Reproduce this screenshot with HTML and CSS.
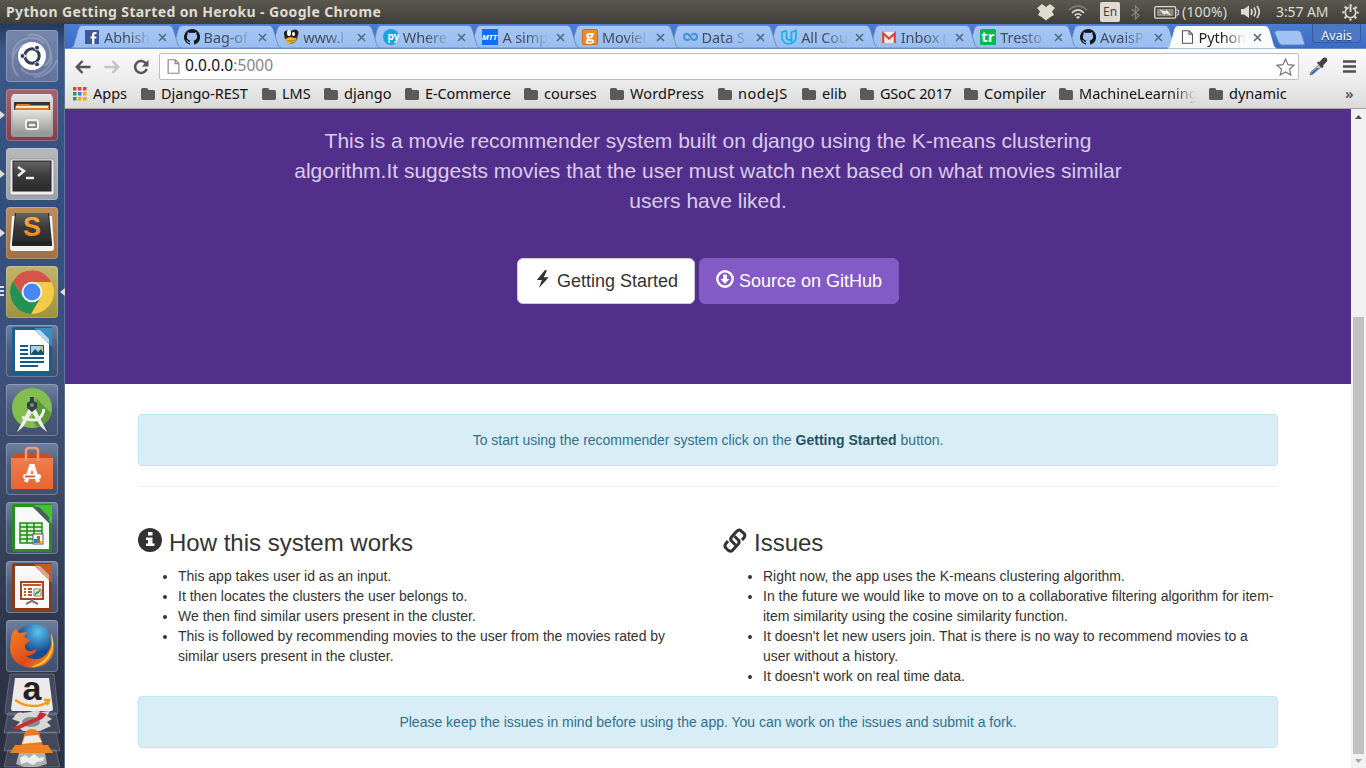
FILE: index.html
```html
<!DOCTYPE html>
<html lang="en">
<head>
<meta charset="utf-8">
<title>Python Getting Started on Heroku</title>
<link rel="stylesheet" href="styles.css">
</head>
<body>
<svg width="0" height="0" class="defs">
  <defs>
    <linearGradient id="tabfill" x2="0" y2="1"><stop stop-color="#a6c7f6"/><stop offset="1" stop-color="#98bdf0"/></linearGradient>
    <linearGradient id="metal" x2="0" y2="1"><stop stop-color="#e4e4e2"/><stop offset="1" stop-color="#969694"/></linearGradient>
    <linearGradient id="dark" x2="0" y2="1"><stop stop-color="#646464"/><stop offset=".5" stop-color="#3b3b3b"/><stop offset="1" stop-color="#2c2c2c"/></linearGradient>
    <linearGradient id="bag" x2="0" y2="1"><stop stop-color="#f08052"/><stop offset="1" stop-color="#ea6530"/></linearGradient>
    <linearGradient id="glow" x2="0" y2="1"><stop stop-color="#ffb45a"/><stop offset="1" stop-color="#ef7c10"/></linearGradient>
    <radialGradient id="globe" cx=".6" cy=".2"><stop stop-color="#5dc3ef"/><stop offset="1" stop-color="#174d91"/></radialGradient>
    <linearGradient id="fox" x2="1" y2="1"><stop stop-color="#f58220"/><stop offset=".6" stop-color="#dc4a1c"/><stop offset="1" stop-color="#f9a824"/></linearGradient>
    <symbol id="tab" viewBox="0 0 110 24"><path d="M0 24C3 23 3 20 4 17L7 6Q8 1.500 11 1.500H98Q101 1.500 102.500 6L106 18Q107 23 110 24Z"/></symbol>
    <symbol id="x" viewBox="0 0 9 9"><path d="M1 1L8 8M8 1L1 8" fill="none" stroke="#55697f" stroke-width="1.600"/></symbol>
    <symbol id="folder" viewBox="0 0 14 12"><path d="M0 1.500Q0 0 1.500 0H5.500Q7 0 7.300 2H12.500Q14 2 14 3.500V10.500Q14 12 12.500 12H1.500Q0 12 0 10.500Z" fill="#5a5a5a"/></symbol>
    <symbol id="page" viewBox="0 0 12 14"><path d="M1 .7H7.500L11 4.200V13.300H1ZM7.500 .7V4.300H11" fill="#fff" stroke="currentColor" stroke-width="1.100"/></symbol>
    <symbol id="github" viewBox="0 0 16 16"><path fill="#15171a" d="M8 0a8 8 0 0 0-2.500 15.600c.4.100.500-.2.500-.4v-1.400c-2.200.5-2.700-1-2.700-1-.4-.9-.9-1.200-.9-1.200-.7-.5.100-.5.100-.5.800.100 1.200.8 1.200.8.700 1.200 1.900.9 2.300.7.100-.5.300-.9.500-1.100C4.700 11.300 2.900 10.600 2.900 7.500c0-.9.300-1.600.8-2.100-.1-.2-.4-1 .1-2.100 0 0 .7-.2 2.200.8a7.500 7.500 0 0 1 4 0c1.500-1 2.200-.8 2.200-.8.5 1.100.2 1.900.1 2.100.5.500.8 1.200.8 2.100 0 3.100-1.900 3.800-3.600 4 .3.200.5.700.5 1.500v2.200c0 .2.100.5.600.4A8 8 0 0 0 8 0z"/></symbol>
  </defs>
</svg>

<header class="menubar">
  <span class="win-title">Python Getting Started on Heroku - Google Chrome</span>
  <div class="tray">
    <svg width="18" height="17" viewBox="0 0 18 17"><path fill="#dfdbd2" d="M5 0L9 3L13 0L18 4L15 7.500L17 11L13.500 13L9 16.500L4.500 13L1 11L3 7.500L0 4Z"/></svg>
    <svg class="wifi" width="20" height="14" viewBox="0 0 20 14" fill="none" stroke="#dfdbd2" stroke-width="1.600"><path d="M1 5Q10-3 19 5" stroke="#85827b"/><path d="M4 7.800Q10 2 16 7.800M6.700 10.500Q10 7 13.300 10.500"/><path d="M10 14L7.800 12Q10 10.500 12.200 12Z" fill="#dfdbd2" stroke="none"/></svg>
    <span class="lang">En</span>
    <svg class="bt" width="9" height="15" viewBox="0 0 9 15"><path d="M.7 4L8 10.500L4.500 14V1L8 4.500L.7 11" fill="none" stroke="#85827b" stroke-width="1.300"/></svg>
    <svg class="bat" width="25" height="13" viewBox="0 0 25 13"><rect x=".7" y=".7" width="21" height="11.500" rx="1.500" fill="none" stroke="#dfdbd2" stroke-width="1.300"/><rect x="3" y="3" width="16.500" height="7" fill="#8c8982"/><path d="M22.500 4H24.300V9H22.500" fill="none" stroke="#dfdbd2"/><path d="M5.500 3.500L11.500 5.500L12.500 3.800L17.500 9.500L11.500 7.300L10.300 9Z" fill="#eeeae2"/></svg>
    <span class="pct">(100%)</span>
    <svg class="vol" width="21" height="16" viewBox="0 0 21 16"><path d="M1 5H4L9 1.500V14L4 10.500H1Z" fill="#dfdbd2"/><path d="M11 5Q13 8 11 11M14 3.500Q17 8 14 12.500M17 2Q21.500 8 17 14" fill="none" stroke="#dfdbd2" stroke-width="1.600"/></svg>
    <span class="clock">3:57 AM</span>
    <svg width="17" height="17" viewBox="0 0 17 17" fill="none" stroke="#dfdbd2"><circle cx="8.500" cy="8.500" r="5.200" stroke-width="1.600" stroke-dasharray="27.700 5" stroke-dashoffset="-2.500" transform="rotate(-90 8.500 8.500)"/><circle cx="8.500" cy="8.500" r="7.100" stroke-width="2.200" stroke-dasharray="2.200 3.376" stroke-dashoffset="1.100"/><path d="M8.500 1.500V8" stroke-width="1.800"/></svg>
  </div>
</header>

<div class="desktop">
<nav class="launcher">
  <div class="tile t-dash run0"><svg viewBox="0 0 52 52"><g fill="none" stroke="#fff" stroke-opacity=".2" stroke-width="2"><path d="M7 30C3 8 31 2 38 14M22 5C44 1 51 30 38 36M45 23C50 43 24 51 15 38M12 46C2 35 7 20 17 14M28 47C43 46 48 37 51 30"/></g><circle cx="26" cy="26" r="14" fill="#fff"/><circle cx="26" cy="26" r="7.200" fill="none" stroke="#323d59" stroke-width="3"/><path d="M17 26H20M30 19L31.500 16.500M30 33L31.500 35.500" stroke="#fff" stroke-width="2"/><g fill="#323d59" stroke="#fff" stroke-width=".8"><circle cx="16.500" cy="26" r="2.400"/><circle cx="31" cy="17.700" r="2.400"/><circle cx="31" cy="34.300" r="2.400"/></g></svg></div>
  <div class="tile t-files run1"><svg viewBox="0 0 52 52"><path d="M7 5H45L47 9V45Q47 48 44 48H8Q5 48 5 45V9Z" fill="url(#metal)"/><path d="M8 13H44V23H8Z" fill="#343434"/><path d="M9 18L11 15H23L25 16H43V23H9Z" fill="#e4791f"/><path d="M10 18H42" stroke="#ffe8c7" stroke-width="2"/><path d="M7 21H45V45H7Z" fill="url(#metal)"/><rect x="20" y="31" width="12" height="9" rx="2" fill="#aaa" stroke="#efefef" stroke-width="2"/><rect x="22" y="34" width="8" height="4" fill="#eee" stroke="#555"/></svg></div>
  <div class="tile t-term run1"><svg viewBox="0 0 52 52"><rect x="4" y="11" width="44" height="36" rx="2" fill="#eee" stroke="#999"/><rect x="7" y="13" width="38" height="30" fill="url(#dark)" stroke="#222"/><path d="M12 19L18 23L12 28" fill="none" stroke="#eee" stroke-width="2.500"/><path d="M20 30H28" stroke="#eee" stroke-width="2.400"/></svg></div>
  <div class="tile t-subl run1"><svg viewBox="0 0 52 52"><path d="M6 9H46L48 41Q48 44 45 44H7Q4 44 4 41Z" fill="#f3f3f3"/><path d="M9 6H43L46 36V39H6V36Z" fill="#242424"/><path d="M10 6H42L45 34H7Z" fill="url(#dark)"/><text x="26" y="29" text-anchor="middle" class="g-s" fill="url(#glow)">S</text></svg></div>
  <div class="tile t-chrome run3"><svg viewBox="0 0 52 52"><circle cx="26" cy="26" r="22" fill="#f7cb45"/><path d="M26 26L26 16H45.500A22 22 0 0 0 7 15L17 31Z" fill="#d5544c"/><path d="M7 15A22 22 0 0 0 25 48L35 31L26 36L17 31Z" fill="#239255"/><circle cx="26" cy="26" r="10.300" fill="#f4f6f6"/><circle cx="26" cy="26" r="8.500" fill="#4787f2"/></svg></div>
  <div class="tile run0"><svg viewBox="0 0 52 52"><path d="M8 2H46V48Q46 50 43 50H9Q6 50 6 47V4Q6 2 8 2Z" fill="#165f90"/><path d="M28 3H46V22Z" fill="#388bc4"/><path d="M9 5H29L43 19V46H9Z" fill="#fff"/><path d="M29 5L43 19V14L34 5Z" fill="#b9d9ec"/><path d="M14 21H22M14 25H22M14 29H22M14 33H38M14 37H38M14 41H32" stroke="#155989" stroke-width="2"/><rect x="24.500" y="20.500" width="13" height="9" fill="#a5d4ef" stroke="#155989"/><path d="M25 29L29 24L32 27L35 24L38 29Z" fill="#244b62"/><circle cx="35.500" cy="22.500" r="1.500" fill="#f4b630"/></svg></div>
  <div class="tile run0"><svg viewBox="0 0 52 52"><circle cx="26" cy="24" r="20" fill="#83bd4f"/><path d="M30 14L45 29A20 20 0 0 1 31 43L26 36Z" fill="#5b9935"/><path d="M23 24L11 48L17 43L27 27ZM29 24L41 48L35 43L25 27Z" fill="#eef0f0"/><path d="M16 33Q35 42 38 25" fill="none" stroke="#eef0f0" stroke-width="3"/><path d="M24 13H28V17L31 19V24L26 28L21 24V19L24 17Z" fill="#384047"/><circle cx="26" cy="21" r="2" fill="#83888c"/></svg></div>
  <div class="tile run0"><svg viewBox="0 0 52 52"><path d="M5 15L9 11H43L47 15V46H5Z" fill="url(#bag)"/><path d="M5 15L9 11H43L47 15" fill="#c94d22"/><path d="M20 18V8Q20 5 23 5H29Q32 5 32 8V18" fill="none" stroke="#f19a76" stroke-width="2.500"/><path d="M20 39L25 23H27L32 39" fill="none" stroke="#fff" stroke-width="4"/><rect x="17" y="31" width="18" height="5" rx="2.500" fill="#fff"/><path d="M19 33.500H29" stroke="#e95b25" stroke-width="2"/></svg></div>
  <div class="tile run0"><svg viewBox="0 0 52 52"><path d="M8 2H46V48Q46 50 43 50H9Q6 50 6 47V4Q6 2 8 2Z" fill="#258f1c"/><path d="M28 3H46V22Z" fill="#43c330"/><path d="M9 5H27L43 21V47H9Z" fill="#f8f8f8"/><path d="M27 5L43 21V15L33 5Z" fill="#4b5b60"/><path d="M14 21H36V41H14ZM14 25H36M14 29H36M14 33H36M14 37H36M21 21V41M28 21V41" fill="#d6f0ce" stroke="#1f8c19" stroke-width="1.500"/><rect x="27" y="32" width="10" height="10" fill="#fff" stroke="#555"/><path d="M28 37H31V41H28Z" fill="#1485c8"/><path d="M31 34H34V41H31Z" fill="#d25b20"/><path d="M34 39H37V41H34Z" fill="#edb61f"/></svg></div>
  <div class="tile run0"><svg viewBox="0 0 52 52"><path d="M8 2H46V48Q46 50 43 50H9Q6 50 6 47V4Q6 2 8 2Z" fill="#8d3b16"/><path d="M28 3H46V22Z" fill="#c75a2b"/><path d="M9 5H29L43 19V47H9Z" fill="#f8f8f8"/><path d="M29 5L43 19V14L34 5Z" fill="#e2a78b"/><rect x="15" y="21" width="22" height="17" fill="#fff" stroke="#a54717" stroke-width="2"/><path d="M17 24H35M18 28H20M22 28H26M18 31H20M22 31H26M18 34H20M22 34H26" stroke="#bd592c" stroke-width="2"/><path d="M26 38V40L20 43M26 40L32 43" stroke="#777" stroke-width="2" fill="none"/><path d="M28 28H35V35H28Z" fill="none" stroke="#777"/><path d="M29 34L31 31L32 32L34 29" fill="none" stroke="#329b37" stroke-width="1.500"/></svg></div>
  <div class="tile run0"><svg viewBox="0 0 52 52"><circle cx="28" cy="24" r="20" fill="url(#globe)"/><path d="M5 20Q5 12 10 9L13 13L21 12L18 17L24 20L19 25Q18 31 25 31L31 29Q29 36 20 36Q28 42 37 37Q46 31 45 18L41 11Q50 18 48 31Q44 46 27 48Q4 46 4 27Z" fill="url(#fox)"/><path d="M45 13Q51 28 41 40Q34 47 25 47Q42 42 46 26Z" fill="#fbd24a"/></svg></div>
  <div class="stack"><svg viewBox="0 0 58 94" width="58" height="94"><g stroke="#99a3b5" stroke-opacity=".4" fill="#aeb8c9" fill-opacity=".18"><path d="M7 0H51L55 37Q55 41 51 41H6Q2 41 2 37Z"/><path d="M5 39H53L57 59H1Z"/><path d="M5 58H53L57 77H1Z"/><path d="M5 76H53L57 93H1Z"/></g><path d="M12 4H46L50 35Q50 37 48 37H10Q8 37 8 35Z" fill="#ecebe9"/><text x="29" y="26" text-anchor="middle" class="g-a" fill="#222">a</text><path d="M12 26Q29 37 45 28M41 26H46L44 31" fill="none" stroke="#f29a18" stroke-width="2.500"/><path d="M11 43Q14 37 20 39L27 38Q33 35 38 38L47 37L44 42L49 45L44 48L48 52L37 57H20L13 52L17 48L9 45Z" fill="#d7d7d5"/><ellipse cx="28" cy="48" rx="9" ry="5" fill="#878b91"/><path d="M9 54L34 43L37 38L44 40L39 45L14 56Z" fill="#c52e32"/><path d="M22 58Q29 52 36 58L40 72H18Z" fill="#ed7a21"/><path d="M22 62L35 61L39 68L19 70Z" fill="#eeeae1"/><path d="M12 71H45L50 79H7Z" fill="#ee8220"/><path d="M16 79H42L44 90L34 93H21L13 90Z" fill="#aeb1ac"/><path d="M17 84L22 81L26 84L31 80L36 84L41 83L40 87L34 88L30 91L24 88L18 90Z" fill="#eeeeea"/></svg></div>
</nav>

<div class="browser">
  <div class="tabstrip">
    <div class="tab z12"><svg class="shape"><use href="#tab"/></svg><svg class="fav" viewBox="0 0 16 16"><rect x="1" y="1" width="14" height="14" fill="#3b5998"/><path d="M12.500 5H11.300Q10.300 5 10.300 6V7.500H12.500L12.200 9.500H10.300V15H8V9.500H6.500V7.500H8V5.700Q8 3 10.700 3H12.500Z" fill="#fff"/></svg><span>Abhish</span><svg class="close"><use href="#x"/></svg></div>
    <div class="tab z11"><svg class="shape"><use href="#tab"/></svg><svg class="fav"><use href="#github"/></svg><span>Bag-of</span><svg class="close"><use href="#x"/></svg></div>
    <div class="tab z10"><svg class="shape"><use href="#tab"/></svg><svg class="fav" viewBox="0 0 16 16"><circle cx="4" cy="4.500" r="3" fill="#222"/><circle cx="12" cy="4" r="3.500" fill="#222"/><circle cx="8" cy="8" r="6.500" fill="#252515"/><ellipse cx="6" cy="4" rx="2" ry="3" fill="#fff"/><ellipse cx="10.500" cy="5" rx="1.500" ry="2" fill="#fff"/><path d="M2 10L7 8L14 9.500L12 13L6 14.500L3 13Z" fill="#f4ba20"/><path d="M4 11.500Q8 13 12 11" stroke="#ad6812" fill="none"/></svg><span>www.l</span><svg class="close"><use href="#x"/></svg></div>
    <div class="tab z9"><svg class="shape"><use href="#tab"/></svg><svg class="fav" viewBox="0 0 16 16"><circle cx="8" cy="8" r="8" fill="#1ba1e2"/><text x="4.500" y="11" class="g-py" fill="#fff">py</text></svg><span>Where</span><svg class="close"><use href="#x"/></svg></div>
    <div class="tab z8"><svg class="shape"><use href="#tab"/></svg><svg class="fav" viewBox="0 0 16 16"><rect width="16" height="16" fill="#126cff"/><text x="0" y="10.500" class="g-mtt" textLength="15" lengthAdjust="spacingAndGlyphs" fill="#fff">MTT</text></svg><span>A simp</span><svg class="close"><use href="#x"/></svg></div>
    <div class="tab z7"><svg class="shape"><use href="#tab"/></svg><svg class="fav" viewBox="0 0 16 16"><rect x=".5" y=".5" width="15" height="15" rx="1.500" fill="#ee8a23" stroke="#ce6d12"/><text x="8" y="11.500" text-anchor="middle" class="g-g" fill="#fff">g</text></svg><span>Moviel</span><svg class="close"><use href="#x"/></svg></div>
    <div class="tab z6"><svg class="shape"><use href="#tab"/></svg><svg class="fav" viewBox="0 0 16 16"><path d="M7.500 9.800Q6.500 11 4.700 11A3.200 3.200 0 0 1 4.700 4.700Q6.800 4.700 8.500 7.800Q10 11 12 11A3.100 3.100 0 0 0 12 4.700Q10.500 4.700 9.500 6" fill="none" stroke="#4591d4" stroke-width="2.100"/></svg><span>Data S</span><svg class="close"><use href="#x"/></svg></div>
    <div class="tab z5"><svg class="shape"><use href="#tab"/></svg><svg class="fav" viewBox="0 0 16 16"><path d="M5.500 1.500L1 3V8Q1 14 7.500 15Q15 14 15 8V1.500L10.500 3V9Q10.500 11 8 11Q5.500 11 5.500 8V2M10.500 3V14" fill="none" stroke="#14b3e6" stroke-width="1.700"/></svg><span>All Cou</span><svg class="close"><use href="#x"/></svg></div>
    <div class="tab z4"><svg class="shape"><use href="#tab"/></svg><svg class="fav" viewBox="0 0 16 16"><rect x="1" y="3" width="14" height="11" fill="#eee"/><path d="M2.200 14V4.500L8 9.500L13.800 4.500V14" fill="none" stroke="#db4437" stroke-width="2.200"/></svg><span>Inbox (</span><svg class="close"><use href="#x"/></svg></div>
    <div class="tab z3"><svg class="shape"><use href="#tab"/></svg><svg class="fav" viewBox="0 0 16 16"><rect width="16" height="16" rx="1.500" fill="#00b951"/><text x="8" y="13" text-anchor="middle" class="g-tr" fill="#fff">tr</text></svg><span>Tresto</span><svg class="close"><use href="#x"/></svg></div>
    <div class="tab z2"><svg class="shape"><use href="#tab"/></svg><svg class="fav"><use href="#github"/></svg><span>AvaisP</span><svg class="close"><use href="#x"/></svg></div>
    <div class="tab active"><svg class="shape"><use href="#tab"/></svg><svg class="fav" viewBox="-1.500 -1 16 16"><use href="#page" width="12" height="14"/></svg><span>Python</span><svg class="close"><use href="#x"/></svg></div>
    <svg class="newtab" width="31" height="16" viewBox="0 0 31 16"><path d="M3 .5H24Q26 .5 27 2.500L30.500 13Q30.500 15 29 15H8Q6 15 5 13L.7 3Q.5 .5 3 .5Z" fill="#a1c3f4" stroke="#5e87c5"/></svg>
    <span class="profile">Avais</span>
  </div>

  <div class="toolbar">
    <svg width="16" height="14" viewBox="0 0 16 14"><path d="M7.500 1L1.800 7L7.500 13M2 7H15.500" fill="none" stroke="#555" stroke-width="2.500"/></svg>
    <svg width="16" height="14" viewBox="0 0 16 14"><path d="M8.500 1L14.200 7L8.500 13M14 7H.5" fill="none" stroke="#c4c4c4" stroke-width="2.500"/></svg>
    <svg width="16" height="16" viewBox="0 0 16 16"><path d="M13 4.500A6 6 0 1 0 13.700 10" fill="none" stroke="#555" stroke-width="2.500"/><path d="M15.500 .8V7.500H8.800Z" fill="#555"/></svg>
    <div class="omnibox"><svg class="doc" width="13" height="15"><use href="#page"/></svg><span class="url">0.0.0.0<i>:5000</i></span><svg class="star" width="19" height="18" viewBox="0 0 19 18"><path d="M9.500 1L12 6.700L18 7.300L13.500 11.300L14.800 17L9.500 14L4.200 17L5.500 11.300L1 7.300L7 6.700Z" fill="#fff" stroke="#777" stroke-width="1.200"/></svg></div>
    <svg class="dropper" width="19" height="19" viewBox="0 0 19 19"><path d="M10.500 5L13.500 1.500Q16-.5 18 1.500Q19 4 17 5.500L14 8.500L14.500 10L13 11L8 6L9 4.500Z" fill="#414348"/><path d="M10 8L2 15L1 18L4 17L12 10Z" fill="#ccd1dc" stroke="#777"/><path d="M8 11L2.500 15.500L2 17L4 16.500L10 11Z" fill="#2f57d0"/></svg>
    <svg class="menu" width="13" height="13" viewBox="0 0 13 13"><path d="M0 1.500H13M0 6.500H13M0 11.500H13" stroke="#4e4e4e" stroke-width="2.500"/></svg>
  </div>

  <div class="bookmarks">
    <svg width="14" height="14" viewBox="0 0 14 14" class="apps"><path d="M0 0H3.500V3.500H0ZM5 0H8.500V3.500H5ZM10 0H13.500V3.500H10Z" fill="#e34335"/><path d="M0 5H3.500V8.500H0ZM0 10H3.500V13.500H0Z" fill="#269b57"/><path d="M5 5H8.500V8.500H5Z" fill="#3a7cf0"/><path d="M10 5H13.500V8.500H10ZM5 10H8.500V13.500H5ZM10 10H13.500V13.500H10Z" fill="#f5a90b"/></svg>
    <span class="w35">Apps</span>
    <svg><use href="#folder"/></svg><span class="w88">Django-REST</span>
    <svg><use href="#folder"/></svg><span class="w29">LMS</span>
    <svg><use href="#folder"/></svg><span class="w48">django</span>
    <svg><use href="#folder"/></svg><span class="w86">E-Commerce</span>
    <svg><use href="#folder"/></svg><span class="w53">courses</span>
    <svg><use href="#folder"/></svg><span class="w75">WordPress</span>
    <svg><use href="#folder"/></svg><span class="w51">nodeJS</span>
    <svg><use href="#folder"/></svg><span class="w25">elib</span>
    <svg><use href="#folder"/></svg><span class="w71">GSoC 2017</span>
    <svg><use href="#folder"/></svg><span class="w62">Compiler</span>
    <svg><use href="#folder"/></svg><span class="w117">MachineLearning</span>
    <svg><use href="#folder"/></svg><span class="w57">dynamic</span>
    <b>»</b>
  </div>

  <div class="viewport">
    <main>
      <section class="jumbotron">
        <p>This is a movie recommender system built on django using the K-means clustering algorithm.It suggests movies that the user must watch next based on what movies similar users have liked.</p>
        <div class="actions">
          <a class="btn"><svg width="19" height="19" viewBox="0 0 19 19"><path d="M11 0L2.800 10H7.800L5 18L14.800 7.200H9.800L13 .5Z" fill="#333"/></svg>Getting Started</a>
          <a class="btn primary"><svg width="19" height="19" viewBox="0 0 19 19"><circle cx="9" cy="9" r="7.700" fill="none" stroke="#fff" stroke-width="2.400"/><path d="M7 4.500H11V9H13.500L9 14L4.500 9H7Z" fill="#fff"/></svg>Source on GitHub</a>
        </div>
      </section>
      <div class="container">
        <div class="alert">To start using the recommender system click on the&nbsp;<strong>Getting Started</strong>&nbsp;button.</div>
        <hr>
        <div class="row">
          <section>
            <h3><svg width="24" height="24" viewBox="0 0 24 24"><circle cx="12" cy="12" r="12" fill="#333"/><path d="M10 4H14.500V7.500H10ZM8 9.500H14.500V15.500H16.500V18H8V15.500H10V12H8Z" fill="#fff"/></svg>How this system works</h3>
            <ul><li>This app takes user id as an input.</li><li>It then locates the clusters the user belongs to.</li><li>We then find similar users present in the cluster.</li><li>This is followed by recommending movies to the user from the movies rated by similar users present in the cluster.</li></ul>
          </section>
          <section>
            <h3><svg width="24" height="25" viewBox="0 0 24 25"><g fill="none" stroke="#333" stroke-width="3" stroke-linejoin="round"><path d="M12.500 17L8.500 13Q6.800 11 8.500 9L14 3Q15.500 1.300 17.500 2.300L21 5.500Q22.600 7.500 21.200 9.500L19 12"/><path d="M5 13L2.500 16Q1.200 18 2.800 20L5.500 22.500Q7.500 24 9.300 22.500L15.300 16Q17 14 15.300 12L11.500 8.200"/></g></svg>Issues</h3>
            <ul><li>Right now, the app uses the K-means clustering algorithm.</li><li>In the future we would like to move on to a collaborative filtering algorithm for item-item similarity using the cosine similarity function.</li><li>It doesn't let new users join. That is there is no way to recommend movies to a user without a history.</li><li>It doesn't work on real time data.</li></ul>
          </section>
        </div>
        <div class="alert">Please keep the issues in mind before using the app. You can work on the issues and submit a fork.</div>
      </div>
    </main>
    <div class="scrollbar"><svg width="7" height="4" viewBox="0 0 7 4"><path d="M0 4L3.500 0L7 4Z" fill="#505050"/></svg><div class="thumb"></div><svg width="7" height="4" viewBox="0 0 7 4"><path d="M0 0L3.500 4L7 0Z" fill="#a3a3a3"/></svg></div>
  </div>
</div>
</div>
</body>
</html>
```
FILE: styles.css
```css
* { box-sizing: border-box; }
body { margin: 0; width: 1366px; height: 768px; overflow: hidden; font-family: "Noto Sans", sans-serif; background: #fff; }
svg { display: block; flex: none; overflow: visible; }
.defs { position: absolute; }

/* top panel */
.menubar { height: 24px; display: flex; align-items: center; justify-content: space-between; padding: 0 7px 0 6px; background: linear-gradient(#5b584f, #403e39); color: #dfdbd2; white-space: nowrap; }
.win-title { font-size: 14px; font-weight: 700; line-height: 24px; letter-spacing: .37px; }
.tray { display: flex; align-items: center; font-size: 14px; line-height: 24px; }
.wifi { margin-left: 13px; }
.lang { margin-left: 12px; width: 20px; height: 20px; line-height: 20px; border-radius: 2px; text-align: center; background: #dfdbd2; color: #46443f; font-size: 12px; }
.bt { margin-left: 11px; }
.bat { margin-left: 14px; }
.pct { margin-left: 3px; width: 46px; letter-spacing: .2px; }
.vol { margin-left: 12px; }
.clock { margin-left: 15px; width: 54px; letter-spacing: -.1px; }
.clock + svg { margin-left: 12px; }

.desktop { display: flex; height: 744px; }

/* launcher */
.launcher { width: 65px; flex: none; padding: 6px 7px 0 6px; display: flex; flex-direction: column; gap: 7px; background: linear-gradient(#243a5e 0, #3c5989 25px, #334f7d 180px, #3c5280 330px, #3d4a68 450px, #2d354a 620px, #2b3041 744px); border-right: 1px solid #5e7398; }
.tile { position: relative; width: 52px; height: 52px; flex: none; border-radius: 4px; background: linear-gradient(#6e819f, #4a5b7b 50%, #43516e); box-shadow: inset 0 0 0 1px rgba(200,212,230,.33); }
.tile svg { width: 52px; height: 52px; }
.t-dash { background: linear-gradient(#7685ab, #64739c); }
.t-files { background: linear-gradient(#a66470, #873c4a); }
.t-term { background: linear-gradient(#b6b8bc, #9da1a6); }
.t-subl { background: linear-gradient(#bd8d5e, #a36f3e); }
.t-chrome { background: linear-gradient(#c1b36d, #9d923e); }
.run1::before { content: ""; position: absolute; left: -6px; top: 22px; border: 4px solid transparent; border-left: 5px solid #ddd; border-right: 0; }
.run3::before { content: ""; position: absolute; left: -6px; top: 20px; width: 4px; height: 11px; background: repeating-linear-gradient(#ddd 0 2px, transparent 2px 4px); }
.run3::after { content: ""; position: absolute; right: -7px; top: 22px; border: 4px solid transparent; border-right: 5px solid #ddd; border-left: 0; }
.stack { margin: -5px 0 0 -3px; }
.g-s { font: bold 27px "Liberation Sans", sans-serif; }
.g-a { font: bold 34px "Liberation Sans", sans-serif; }

/* tabs */
.browser { width: 1301px; display: flex; flex-direction: column; }
.tabstrip { height: 25px; flex: none; padding: 0 0 1px 6px; display: flex; background: linear-gradient(#4b7dd4, #3c6bc4); border-bottom: 1px solid #6b8fc0; position: relative; }
.tab { position: relative; width: 99.600px; height: 24px; flex: none; display: flex; align-items: center; padding: 2px 0 0 13px; color: #434d5c; font-size: 14.500px; }
.shape { position: absolute; left: 0; top: 0; width: 110px; height: 24px; fill: url(#tabfill); stroke: #6587b7; stroke-width: .8; }
.fav { position: relative; width: 16px; height: 16px; overflow: hidden; }
.tab span { position: relative; width: 48px; margin-left: 4px; line-height: 20px; white-space: nowrap; overflow: hidden; letter-spacing: -.1px; -webkit-mask-image: linear-gradient(90deg, #000 50%, transparent 98%); mask-image: linear-gradient(90deg, #000 50%, transparent 98%); }
.close { position: relative; width: 9px; height: 9px; margin-left: 6px; }
.z12 { z-index: 12; } .z11 { z-index: 11; } .z10 { z-index: 10; } .z9 { z-index: 9; } .z8 { z-index: 8; } .z7 { z-index: 7; }
.z6 { z-index: 6; } .z5 { z-index: 5; } .z4 { z-index: 4; } .z3 { z-index: 3; } .z2 { z-index: 2; }
.active { z-index: 20; color: #222; }
.active .shape { fill: #fbfbfb; stroke: none; height: 25px; }
.active .fav { color: #555; }
.active span { margin-left: 3px; }
.newtab { margin: 6px 0 0 8px; }
.profile { margin: 0 0 0 7px; width: 49px; height: 19px; border: 1px solid #335b9f; border-top: 0; border-radius: 0 0 4px 4px; background: #4c78c3; color: #fff; font-size: 12.500px; line-height: 23px; text-align: center; text-shadow: 0 1px 1px #1d3667; }
.g-py { font: bold 10px "Open Sans", sans-serif; }
.g-mtt { font: italic bold 7px "Open Sans", sans-serif; }
.g-g { font: bold 15px "Open Sans", sans-serif; }
.g-tr { font: bold 15px "Open Sans", sans-serif; }

/* toolbar */
.toolbar { height: 32px; flex: none; display: flex; align-items: center; padding: 3px 10px 0 10px; background: linear-gradient(#fbfbfb, #ececec); }
.toolbar > svg { margin-right: 13px; }
.toolbar > svg:nth-of-type(3) { margin-right: 10px; }
.omnibox { width: 1140px; height: 27px; border: 1px solid #bdbdbd; border-radius: 2px; background: #fff; display: flex; align-items: center; padding: 0 3px 0 7px; }
.doc { color: #888; }
.url { margin: -2px 0 0 5px; font-size: 15.500px; line-height: 25px; letter-spacing: .05px; color: #111; }
.url i { font-style: normal; color: #858585; }
.star { margin-left: auto; }
.toolbar > .dropper { margin: 0 15px 0 10px; }
.toolbar > .menu { margin: 0; }
.bookmarks { height: 28px; flex: none; display: flex; align-items: center; padding: 0 0 1px 8px; background: linear-gradient(#ececec, #dadada); border-bottom: 1px solid #a5a5a5; font-size: 14.500px; line-height: 24px; color: #111; white-space: nowrap; }
.bookmarks svg { width: 14px; height: 12px; margin-right: 6px; }
.bookmarks .apps { height: 14px; }
.bookmarks span { margin: -2px 13px 0 0; }
.bookmarks b { font-size: 15px; font-weight: 600; color: #555; margin: -2px 0 0 46px; }
.w35 { width: 35px; } .w88 { width: 88px; } .w29 { width: 29px; } .w48 { width: 48px; } .w86 { width: 86px; letter-spacing: -.1px; } .w53 { width: 53px; }
.w75 { width: 75px; letter-spacing: .1px; } .w51 { width: 51px; letter-spacing: .5px; } .w25 { width: 25px; } .w71 { width: 71px; letter-spacing: -.2px; } .w62 { width: 62px; } .w57 { width: 57px; }
.w117 { width: 117px; overflow: hidden; -webkit-mask-image: linear-gradient(90deg, #000 80%, transparent); mask-image: linear-gradient(90deg, #000 80%, transparent); }

/* page */
.viewport { flex: 1; min-height: 0; display: flex; font-family: "Liberation Sans", Arial, sans-serif; font-size: 14px; line-height: 20px; color: #333; }
main { width: 1286px; background: #fff; overflow: hidden; }
.jumbotron { height: 275px; padding-top: 17px; background: #532f8c; text-align: center; }
.jumbotron p { width: 855px; margin: 0 auto 42px; font-size: 21px; line-height: 30px; color: #d9ccee; }
.actions { display: flex; justify-content: center; gap: 4px; }
.btn { height: 46px; display: flex; align-items: center; padding: 0 16px; border: 1px solid #ccc; border-radius: 6px; background: #fff; color: #333; font-size: 18px; white-space: nowrap; }
.btn svg { margin: -3px 4px 0 0; }
.btn.primary { background: #845ac7; border-color: #845ac7; color: #fff; }
.container { width: 1140px; margin: 30px auto 0; }
.alert { height: 52px; padding: 15px; border: 1px solid #bce8f1; border-radius: 4px; background: #d9edf7; color: #31708f; text-align: center; display: flex; justify-content: center; }
.alert strong { color: #245269; }
hr { margin: 20px 0 40px; border: 0; border-top: 1px solid #eee; }
.row { display: grid; grid-template-columns: 555px 555px; gap: 30px; }
h3 { margin: 0 0 10px; height: 29px; display: flex; font-size: 24px; font-weight: 500; line-height: 32px; }
h3 svg { margin: 1px 7px 0 0; }
ul { margin: 0 0 10px; padding-left: 40px; }
.scrollbar { width: 15px; flex: none; background: #f1f1f1; display: flex; flex-direction: column; align-items: center; padding: 6px 0 5px 0; }
.thumb { width: 11px; height: 437px; background: #c1c1c1; margin: 198px 1px auto 0; }
```
